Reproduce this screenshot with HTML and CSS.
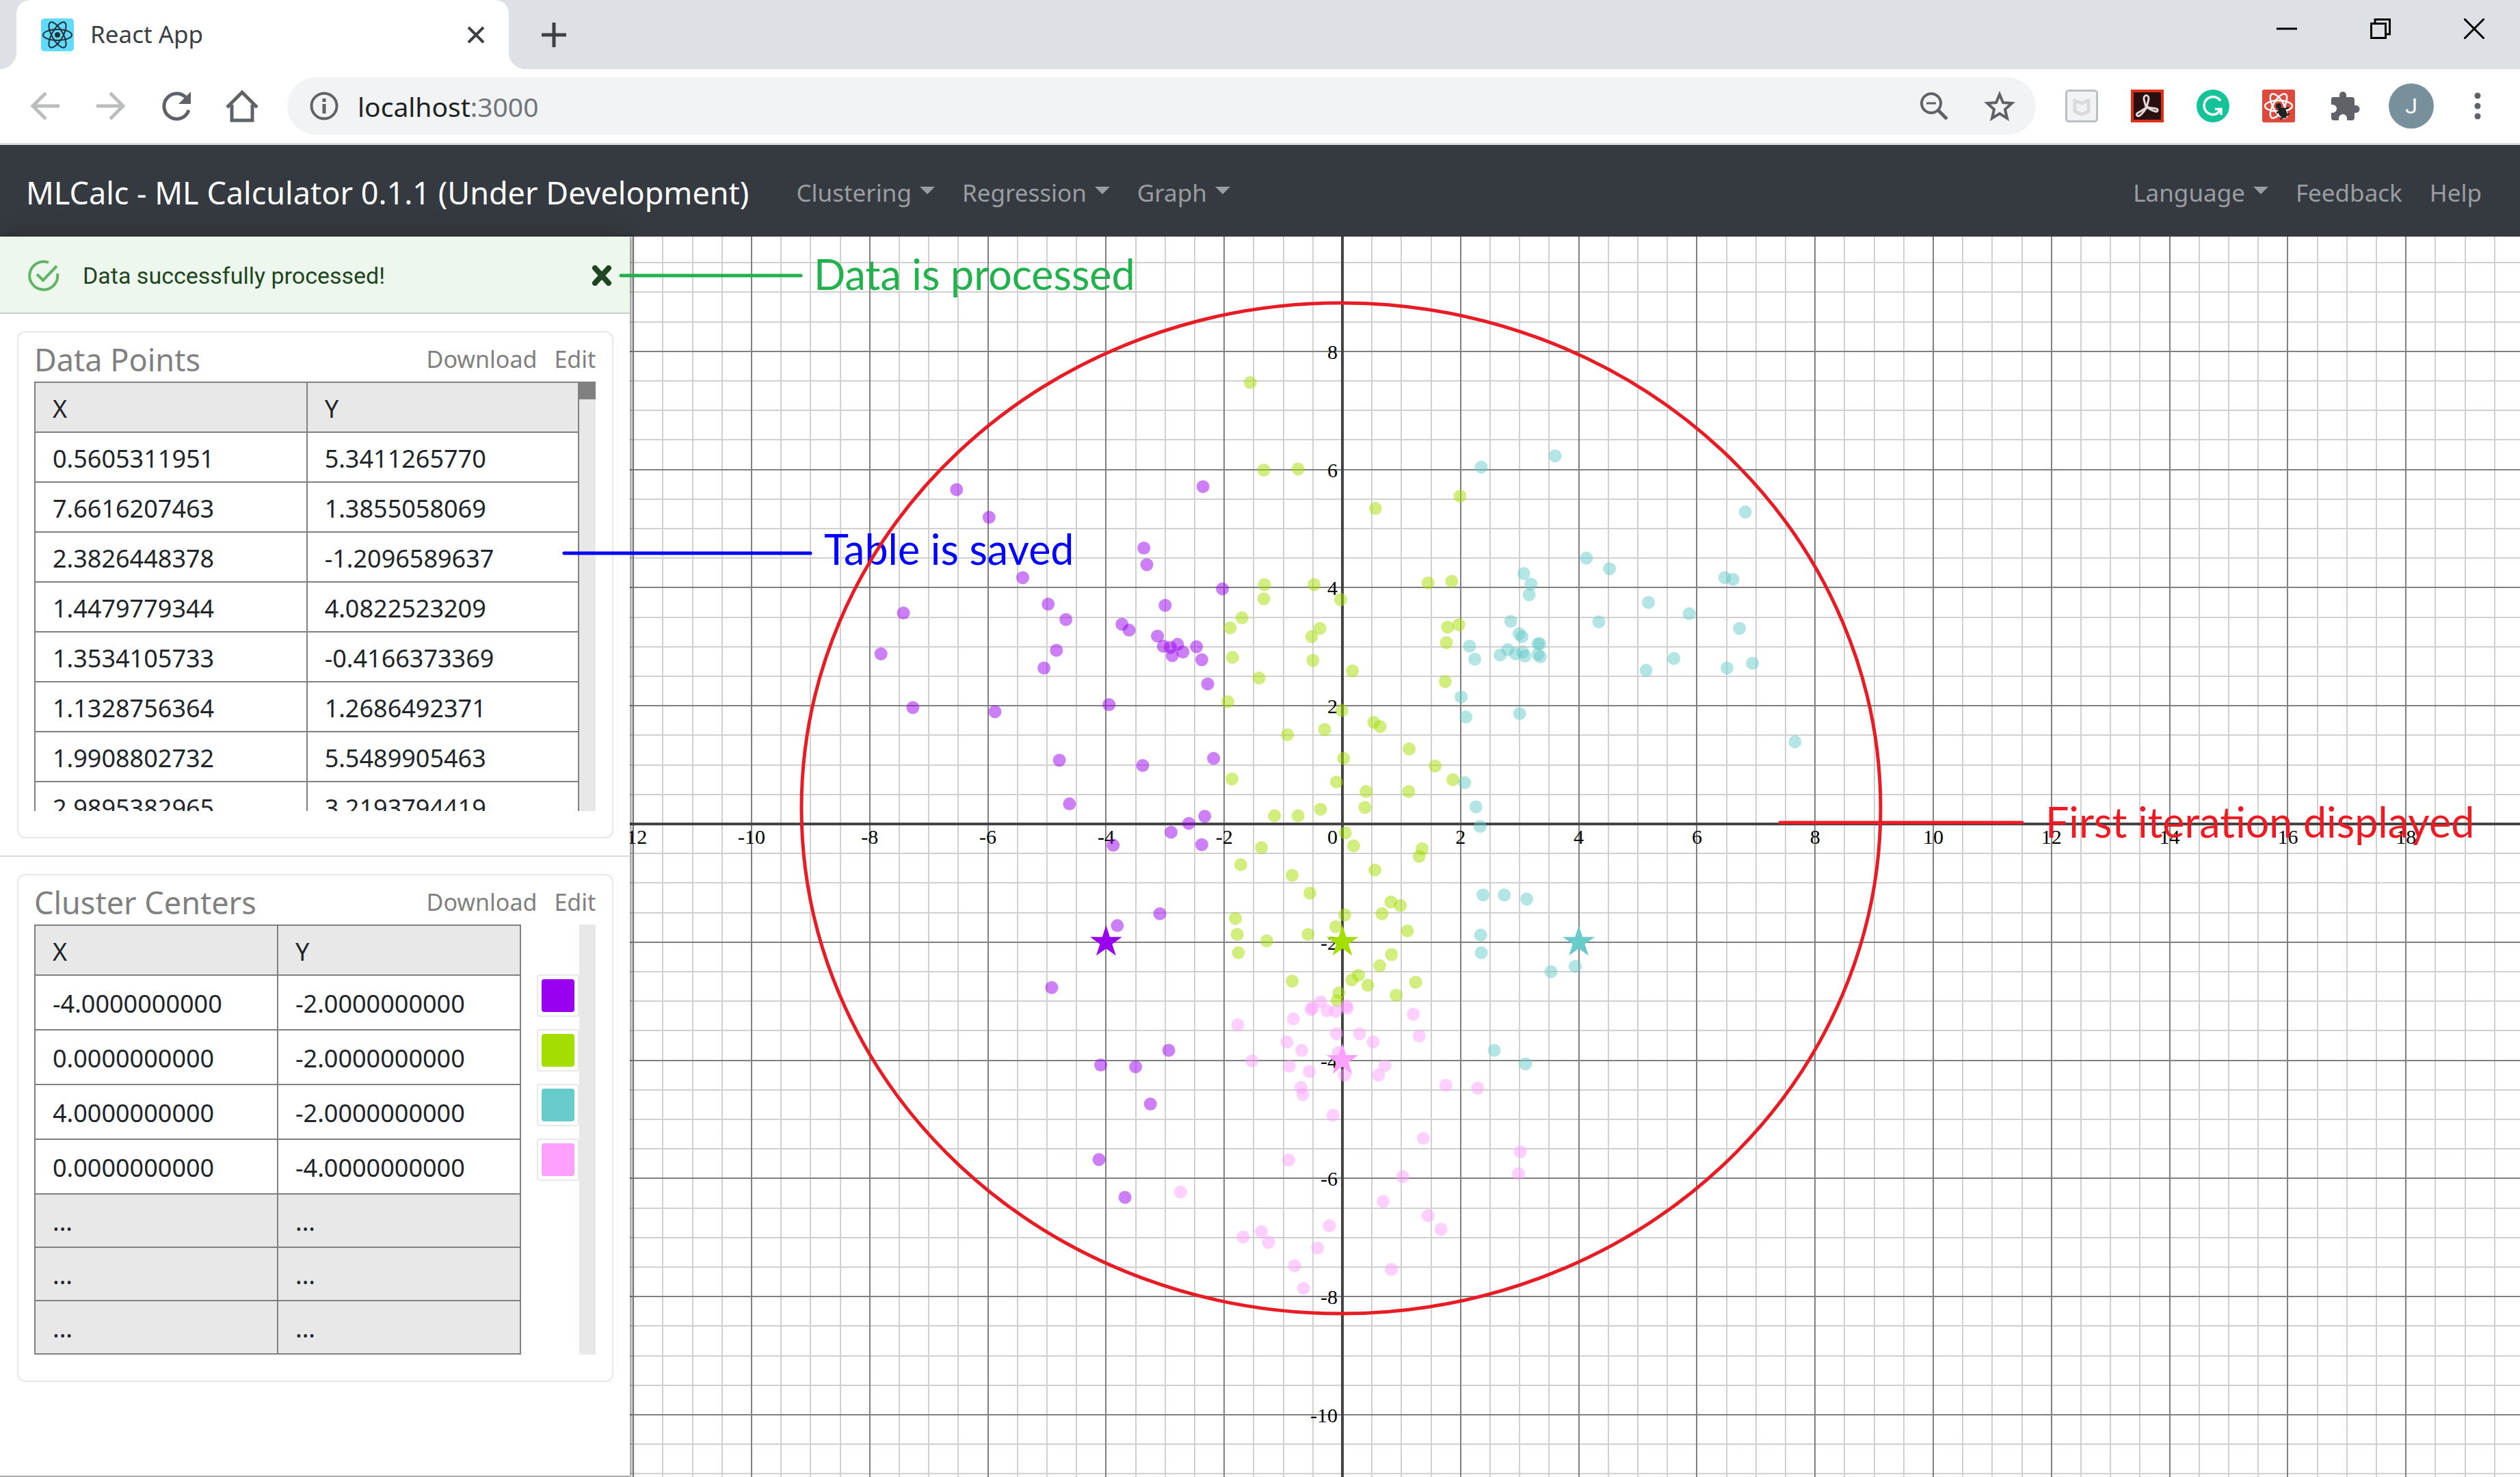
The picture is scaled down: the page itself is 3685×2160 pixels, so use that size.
FILE: index.html
```html
<!DOCTYPE html>
<html lang="en">
<head>
<meta charset="utf-8">
<title>React App</title>
<link rel="stylesheet" href="styles.css">
</head>
<body>
<header class="browser">
  <div class="tabstrip">
    <div class="tab">
      <svg class="icon-48" viewBox="0 0 48 48" aria-hidden="true"><rect width="48" height="48" rx="5" fill="#61dafb"/><g fill="none" stroke="#20303a" stroke-width="2"><ellipse cx="24" cy="24" rx="21" ry="8"/><ellipse cx="24" cy="24" rx="21" ry="8" transform="rotate(60 24 24)"/><ellipse cx="24" cy="24" rx="21" ry="8" transform="rotate(120 24 24)"/></g><circle cx="24" cy="24" r="4" fill="#20303a"/></svg>
      <span class="tab-title">React App</span>
      <button class="plain tab-close" aria-label="Close tab"><svg width="28" height="28" viewBox="0 0 28 28"><path d="M3 3l22 22M25 3L3 25" stroke="#3c4043" stroke-width="4"/></svg></button>
    </div>
    <button class="plain new-tab" aria-label="New tab"><svg width="38" height="38" viewBox="0 0 38 38"><path d="M19 1v36M1 19h36" stroke="#3c4043" stroke-width="5"/></svg></button>
    <div class="window-controls">
      <button class="plain" aria-label="Minimize"><svg width="30" height="30" viewBox="0 0 30 30"><path d="M0 15h30" stroke="#000" stroke-width="3"/></svg></button>
      <button class="plain" aria-label="Restore"><svg width="30" height="30" viewBox="0 0 30 30" fill="none" stroke="#000" stroke-width="3"><path d="M1.500 7.500h21v21h-21zM7 7V1.500h21.500v21.500H23"/></svg></button>
      <button class="plain" aria-label="Close window"><svg width="30" height="30" viewBox="0 0 30 30"><path d="M0 0l30 30M30 0L0 30" stroke="#000" stroke-width="3"/></svg></button>
    </div>
  </div>
  <div class="toolbar">
    <div class="nav-buttons">
      <button class="plain" aria-label="Back"><svg width="48" height="48" viewBox="0 0 48 48" fill="none" stroke="#babcbe" stroke-width="5"><path d="M45 24H7M25 5L6 24l19 19"/></svg></button>
      <button class="plain" aria-label="Forward"><svg width="48" height="48" viewBox="0 0 48 48" fill="none" stroke="#babcbe" stroke-width="5"><path d="M3 24h38M23 5l19 19-19 19"/></svg></button>
      <button class="plain" aria-label="Reload"><svg width="48" height="48" viewBox="0 0 48 48"><path d="M39 13A18.500 18.500 0 1 0 42 30" fill="none" stroke="#5f6368" stroke-width="5"/><path d="M45 3v18H27z" fill="#5f6368"/></svg></button>
      <button class="plain" aria-label="Home"><svg width="48" height="48" viewBox="0 0 48 48" fill="none" stroke="#5f6368" stroke-width="5"><path d="M2 26L24 4l22 22M9 22v23h30V22"/></svg></button>
    </div>
    <div class="omnibox">
      <svg width="42" height="42" viewBox="0 0 42 42" aria-hidden="true"><circle cx="21" cy="21" r="18.500" fill="none" stroke="#5f6368" stroke-width="4"/><path d="M21 18v14M21 10v5" stroke="#5f6368" stroke-width="5"/></svg>
      <span class="url">localhost<span class="port">:3000</span></span>
      <button class="plain zoom-button" aria-label="Zoom"><svg width="42" height="42" viewBox="0 0 42 42" fill="none" stroke="#5f6368"><circle cx="17" cy="17" r="14" stroke-width="4"/><path d="M10 17h14" stroke-width="3"/><path d="M27 27l13 13" stroke-width="5"/></svg></button>
      <button class="plain" aria-label="Bookmark"><svg width="46" height="46" viewBox="0 0 46 46"><path d="M23 6l5 12 13 1-10 9 3 13-11-7-11 7 3-13-10-9 13-1z" fill="none" stroke="#5f6368" stroke-width="4"/></svg></button>
    </div>
    <div class="extensions">
      <button class="plain" aria-label="McAfee"><svg class="icon-48" viewBox="0 0 48 48"><rect x="1.500" y="1.500" width="45" height="45" rx="4" fill="#f1f3f4" stroke="#b9c0c4" stroke-width="3"/><path d="M14 16l10 4 10-4v16l-10 4-10-4z" fill="none" stroke="#d7dbdd" stroke-width="5"/></svg></button>
      <button class="plain" aria-label="Adobe Acrobat"><svg class="icon-48" viewBox="0 0 48 48"><rect x="2" y="2" width="44" height="44" fill="#2a0f10" stroke="#dc3018" stroke-width="4"/><g fill="none" stroke="#e0d8d7" stroke-width="3"><path d="M23 28c-1-5-4-11-4-15 0-6 7-6 7 0 0 4-3 10-3 15z"/><path d="M23 26c-3 5-6 9-10 12-3 2-6-1-4-3 4-3 9-5 14-9z"/><path d="M22 25c5 2 9 2 15 3 4 1 2 5-1 4-5-1-9-4-14-7z"/></g></svg></button>
      <button class="plain" aria-label="Grammarly"><svg class="icon-48" viewBox="0 0 48 48"><circle cx="24" cy="24" r="24" fill="#15c39a"/><path d="M35 16.500A13 13 0 1 0 31 34.500L34 30M27 28.500h9V37" fill="none" stroke="#fff" stroke-width="3.500"/></svg></button>
      <button class="plain" aria-label="React Developer Tools"><svg class="icon-48" viewBox="0 0 48 48"><rect width="48" height="48" rx="3" fill="#dd4a3c"/><g fill="none" stroke="#fff" stroke-width="2.500"><ellipse cx="24" cy="24" rx="20" ry="8"/><ellipse cx="24" cy="24" rx="20" ry="8" transform="rotate(60 24 24)"/><ellipse cx="24" cy="24" rx="20" ry="8" transform="rotate(120 24 24)"/></g><circle cx="24" cy="24" r="4" fill="#222"/><ellipse cx="30" cy="34" rx="6" ry="8" transform="rotate(-30 30 34)" fill="#222"/><path d="M21 34l18-8M26 43l14-8M23 28l4 4M31 26l3 16" stroke="#222" stroke-width="2.500"/></svg></button>
      <button class="plain" aria-label="Extensions"><svg class="icon-48" viewBox="0 0 48 48"><path d="M8 11h9V8a5 5 0 0 1 10 0v3h8a4 4 0 0 1 4 4v8h2a5.500 5.500 0 0 1 0 11h-2v7a4 4 0 0 1-4 4H28v-3a6 6 0 0 0-12 0v3H9a4 4 0 0 1-4-4v-7h2a6 6 0 0 0 0-12H5v-8a3 3 0 0 1 3-3z" fill="#5f6368"/></svg></button>
      <button class="plain avatar" aria-label="Profile">J</button>
      <button class="plain" aria-label="Menu"><svg width="16" height="40" viewBox="0 0 16 40" fill="#5f6368"><circle cx="8" cy="5" r="4.500"/><circle cx="8" cy="20" r="4.500"/><circle cx="8" cy="35" r="4.500"/></svg></button>
    </div>
  </div>
</header>

<nav class="navbar">
  <a class="brand" href="#">MLCalc - ML Calculator 0.1.1 (Under Development)</a>
  <button class="plain nav-item caret">Clustering</button>
  <button class="plain nav-item caret">Regression</button>
  <button class="plain nav-item caret">Graph</button>
  <span class="spacer"></span>
  <button class="plain nav-item caret">Language</button>
  <a class="nav-item" href="#">Feedback</a>
  <a class="nav-item" href="#">Help</a>
</nav>

<main class="workspace">
  <svg class="plot" viewBox="0 0 3685 1814" preserveAspectRatio="xMinYMin slice" role="img" aria-label="Cluster plot">
    <g id="grid"></g>
    <g id="points"></g>
  </svg>

  <aside class="sidebar">
    <div class="alert" role="status">
      <svg width="46" height="46" viewBox="0 0 46 46" fill="none" stroke="#5fb563" stroke-width="4" aria-hidden="true"><path d="M43 20A20.500 20.500 0 1 1 30 4"/><path d="M13 21l9 9L42 9"/></svg>
      <span class="alert-text">Data successfully processed!</span>
      <button class="plain" aria-label="Dismiss"><svg width="30" height="30" viewBox="0 0 30 30"><path d="M5 4l20 22M25 4L5 26" stroke="#1e4620" stroke-width="8" stroke-linecap="round"/></svg></button>
    </div>

    <section class="pane">
      <div class="card">
        <div class="card-head"><h2>Data Points</h2><a href="#">Download</a><a href="#">Edit</a></div>
        <div class="scroll points-scroll">
          <table>
            <thead><tr><th>X</th><th>Y</th></tr></thead>
            <tbody>
              <tr><td>0.5605311951</td><td>5.3411265770</td></tr>
              <tr><td>7.6616207463</td><td>1.3855058069</td></tr>
              <tr><td>2.3826448378</td><td>-1.2096589637</td></tr>
              <tr><td>1.4479779344</td><td>4.0822523209</td></tr>
              <tr><td>1.3534105733</td><td>-0.4166373369</td></tr>
              <tr><td>1.1328756364</td><td>1.2686492371</td></tr>
              <tr><td>1.9908802732</td><td>5.5489905463</td></tr>
              <tr><td>2.9895382965</td><td>3.2193794419</td></tr>
            </tbody>
          </table>
          <div class="track"><div class="thumb"></div></div>
        </div>
      </div>
    </section>

    <section class="pane">
      <div class="card">
        <div class="card-head"><h2>Cluster Centers</h2><a href="#">Download</a><a href="#">Edit</a></div>
        <div class="scroll">
          <table class="centers">
            <thead><tr><th>X</th><th>Y</th></tr></thead>
            <tbody>
              <tr><td>-4.0000000000</td><td>-2.0000000000</td></tr>
              <tr><td>0.0000000000</td><td>-2.0000000000</td></tr>
              <tr><td>4.0000000000</td><td>-2.0000000000</td></tr>
              <tr><td>0.0000000000</td><td>-4.0000000000</td></tr>
              <tr class="empty"><td>...</td><td>...</td></tr>
              <tr class="empty"><td>...</td><td>...</td></tr>
              <tr class="empty"><td>...</td><td>...</td></tr>
            </tbody>
          </table>
          <div class="swatches">
            <button class="swatch purple" aria-label="Colour of cluster 1"></button>
            <button class="swatch green" aria-label="Colour of cluster 2"></button>
            <button class="swatch teal" aria-label="Colour of cluster 3"></button>
            <button class="swatch pink" aria-label="Colour of cluster 4"></button>
          </div>
          <div class="track"></div>
        </div>
      </div>
    </section>
  </aside>

  <svg class="notes" viewBox="0 0 3685 1814" preserveAspectRatio="xMinYMin slice">
    <g stroke-width="5" stroke-linecap="round" fill="none">
      <path d="M908 57H1171" stroke="#22b14c"/>
      <path d="M825 463H1185" stroke="#0000ff"/>
      <path d="M2603 857H2957" stroke="#ed1c24"/>
    </g>
    <text class="note" x="1190" y="78" fill="#22b14c">Data is processed</text>
    <text class="note" x="1205" y="480" fill="#0000ff">Table is saved</text>
    <text class="note" x="2991" y="879" fill="#ed1c24">First iteration displayed</text>
    <ellipse cx="1961" cy="836" rx="789" ry="739" fill="none" stroke="#e81c24" stroke-width="5"/>
  </svg>
</main>
<script src="plot.js"></script>
</body>
</html>
```
FILE: styles.css
```css
* { box-sizing: border-box; }

body {
  margin: 0;
  min-height: 100vh;
  display: flex;
  flex-direction: column;
  font-family: "Noto Sans", "Open Sans", sans-serif;
  font-size: 36px;
  color: #212529;
  background: #fff;
}

svg { display: block; }
a { color: inherit; text-decoration: none; }

.plain {
  padding: 0;
  border: 0;
  background: none;
  font: inherit;
  color: inherit;
}

.icon-48 { width: 48px; height: 48px; }

/* Browser window */
.tabstrip {
  display: flex;
  align-items: center;
  height: 101px;
  padding: 0 52px 0 24px;
  background: #dde1e6;
}
.tab {
  position: relative;
  display: flex;
  align-items: center;
  width: 720px;
  height: 101px;
  padding: 0 34px 0 36px;
  border-radius: 20px 20px 0 0;
  background: #fff;
}
.tab::before,
.tab::after {
  content: "";
  position: absolute;
  bottom: 0;
  width: 24px;
  height: 24px;
}
.tab::before { left: -24px; background: radial-gradient(circle at 0 0, transparent 24px, #fff 24px); }
.tab::after { right: -24px; background: radial-gradient(circle at 100% 0, transparent 24px, #fff 24px); }
.tab-title {
  flex: 1;
  padding: 0 0 3px 24px;
  font-size: 35px;
  color: #3c4043;
}
.new-tab { margin-left: 47px; }
.window-controls {
  display: flex;
  gap: 107px;
  margin-left: auto;
  padding-bottom: 17px;
}

.toolbar {
  display: flex;
  align-items: center;
  height: 111px;
  padding: 0 54px 0 42px;
  border-bottom: 3px solid #dadce0;
}
.nav-buttons { display: flex; gap: 48px; }
.omnibox {
  flex: 1;
  display: flex;
  align-items: center;
  height: 84px;
  margin: 0 43px 0 42px;
  padding: 0 30px 0 33px;
  border-radius: 42px;
  background: #f1f3f4;
}
.url { flex: 1; padding-left: 28px; font-size: 39px; color: #202124; }
.port { color: #72767a; }
.zoom-button { margin-right: 52px; }
.extensions { display: flex; align-items: center; gap: 48px; }
.avatar {
  width: 66px;
  height: 66px;
  margin: 0 8px 0 -7px;
  border-radius: 50%;
  background: #78909c;
  color: #fff;
  font-family: Roboto, sans-serif;
  font-size: 32px;
}

/* Application bar */
.navbar {
  display: flex;
  align-items: center;
  gap: 40px;
  height: 134px;
  padding: 4px 56px 0 38px;
  background: #343a40;
  color: #9a9da0;
}
.brand { margin-right: 29px; font-size: 45px; color: #fff; }
.spacer { flex: 1; }
.nav-item { display: flex; align-items: center; font-size: 35px; }
.caret::after {
  content: "";
  margin: 0 0 6px 12px;
  border: 11px solid transparent;
  border-top-color: #9a9da0;
  border-bottom: 0;
}

/* Workspace: the plot runs below the sidebar, the notes above both */
.workspace {
  flex: 1;
  display: grid;
  grid-template-columns: 25% 1fr;
}
.plot, .notes {
  grid-area: 1 / 1 / 2 / 3;
  width: 100%;
  height: 100%;
}
.notes { z-index: 2; pointer-events: none; }
.note { font-family: Lato, sans-serif; font-size: 61px; }
.axis-label { font-family: "Liberation Serif", serif; font-size: 30px; fill: #000; }

.sidebar {
  grid-area: 1 / 1 / 2 / 2;
  z-index: 1;
  background: #fff;
  border-bottom: 2px solid #aaa;
  box-shadow: 2px 0 6px rgba(0, 0, 0, 0.5);
}

.alert {
  display: flex;
  align-items: center;
  height: 113px;
  padding: 3px 26px 0 41px;
  border-bottom: 2px solid #ccc;
  background: #edf7ed;
  color: #1e4620;
  box-shadow: 0 -24px 20px -14px #333;
}
.alert-text {
  flex: 1;
  padding-left: 34px;
  font-family: Roboto, sans-serif;
  font-size: 34px;
}

.pane { padding: 25px 24px 25px 25px; }
.pane + .pane { border-top: 2px solid #ddd; }
.card {
  padding: 20px 24px 38px 23px;
  border: 2px solid #e8e8e8;
  border-radius: 12px;
}
.card-head {
  display: flex;
  align-items: center;
  height: 52px;
  padding-bottom: 14px;
  color: #808080;
}
.card-head h2 { flex: 1; margin: 0; font-size: 45px; font-weight: 400; }
.card-head a { margin-left: 25px; font-size: 34px; }

.scroll { display: flex; justify-content: space-between; }
.points-scroll { height: 628px; overflow: hidden; }
.track { flex: none; width: 24px; background: #e8e8e8; }
.thumb { height: 26px; background: #808080; }

table {
  flex: 1;
  align-self: flex-start;
  table-layout: fixed;
  border-collapse: collapse;
}
th, td {
  width: 50%;
  height: 73px;
  padding: 4px 25px 0;
  border: 2px solid #808080;
  line-height: 48px;
  font-weight: 400;
  text-align: left;
}
td { background: #fff; }
th, .empty td { background: #e8e8e8; }
.centers { flex: none; width: 712px; }
.centers td { height: 80px; }
.centers .empty td { height: 78px; }

.swatches {
  display: flex;
  flex-direction: column;
  gap: 18px;
  margin-left: auto;
  padding-top: 73px;
}
.swatch {
  width: 62px;
  height: 62px;
  padding: 5px;
  border: 2px solid #e8e8e8;
  border-radius: 4px;
  background-color: #fff;
  background-clip: content-box;
}
.swatch::before {
  content: "";
  display: block;
  height: 48px;
  border-radius: 4px;
  background: currentColor;
}
.purple { color: #9900ef; }
.green { color: #a4dd00; }
.teal { color: #68ccca; }
.pink { color: #fda1ff; }
```
FILE: plot.js
```js
const ORIGIN = { x: 1963, y: 859 };
const UNIT = 86.4;

const clusters = [
  { color: "#9900ef", center: [-4, -2], points: [
    [-6.53,5.66],[-5.98,5.19],[-5.41,4.17],[-4.98,3.72],[-4.68,3.46],[-4.84,2.94],[-5.05,2.64],[-7.43,3.57],[-7.81,2.88],[-7.27,1.97],
    [-5.88,1.9],[-3.95,2.02],[-2.36,5.71],[-3.36,4.67],[-3.31,4.39],[-2.03,3.98],[-3,3.7],[-3.73,3.38],[-3.61,3.28],[-3.13,3.18],
    [-3.03,3.01],[-2.91,2.99],[-2.79,3.04],[-2.7,2.91],[-2.88,2.85],[-2.47,3],[-2.38,2.78],[-2.28,2.37],[-2.18,1.11],[-4.79,1.08],
    [-3.38,0.99],[-4.62,0.34],[-2.33,0.13],[-2.6,0.01],[-2.9,-0.14],[-2.38,-0.35],[-3.88,-0.36],[-3.09,-1.52],[-3.81,-1.72],[-4.92,-2.77],
    [-2.94,-3.83],[-4.09,-4.08],[-3.5,-4.11],[-3.25,-4.74],[-4.12,-5.68],[-3.68,-6.32]
  ] },
  { color: "#a4dd00", center: [0, -2], points: [
    [-1.56,7.47],[-1.33,5.99],[-0.75,6.01],[0.56,5.34],[1.99,5.55],[1.45,4.08],[1.85,4.11],[-1.32,4.05],[-0.48,4.05],[-1.33,3.81],
    [-0.03,3.8],[-1.7,3.49],[-1.9,3.32],[-0.38,3.31],[-0.52,3.17],[-1.86,2.82],[-0.5,2.77],[0.17,2.59],[-1.41,2.47],[-1.94,2.07],
    [-0.01,1.92],[-0.3,1.6],[-0.93,1.51],[0.53,1.72],[0.64,1.65],[1.13,1.27],[1.57,0.98],[0.02,1.11],[1.87,0.75],[-1.87,0.76],
    [-0.1,0.71],[0.4,0.55],[1.12,0.55],[0.38,0.28],[-0.37,0.25],[-1.15,0.14],[-0.75,0.14],[1.78,3.33],[1.97,3.37],[1.76,3.07],
    [1.74,2.41],[0.05,-0.15],[0.19,-0.37],[-1.37,-0.4],[1.35,-0.42],[1.3,-0.55],[-1.72,-0.69],[-0.85,-0.87],[0.55,-0.78],[-0.55,-1.17],
    [0.82,-1.32],[0.98,-1.38],[0.67,-1.52],[0.04,-1.54],[-0.11,-1.74],[1.1,-1.81],[-1.81,-1.6],[-1.78,-1.87],[-1.28,-1.98],[-0.58,-1.87],
    [-1.76,-2.18],[0.83,-2.21],[0.63,-2.4],[0.27,-2.56],[0.16,-2.64],[0.43,-2.73],[-0.85,-2.66],[1.24,-2.68],[0.91,-2.9],[-0.06,-2.86],
    [-0.09,-2.99]
  ] },
  { color: "#68ccca", center: [4, -2], points: [
    [2.35,6.04],[3.6,6.23],[4.13,4.5],[4.52,4.32],[3.07,4.24],[3.19,4.06],[3.16,3.88],[2.85,3.43],[4.34,3.42],[2.99,3.22],
    [3.04,3.17],[3.31,3.05],[3.34,3.05],[2.15,3.01],[2.24,2.79],[2.67,2.86],[2.8,2.95],[2.93,2.88],[3.05,2.91],[3.09,2.84],
    [3.31,2.87],[3.35,2.83],[2.01,2.15],[2.09,1.81],[3,1.87],[2.07,0.7],[2.26,0.29],[2.33,-0.04],[6.82,5.28],[6.47,4.17],
    [6.61,4.14],[5.18,3.75],[5.87,3.56],[6.72,3.31],[5.14,2.6],[5.61,2.8],[6.51,2.64],[6.94,2.72],[7.66,1.39],[2.38,-1.2],
    [2.74,-1.2],[3.12,-1.27],[2.34,-1.88],[2.35,-2.18],[3.53,-2.5],[3.94,-2.41],[2.57,-3.83],[3.1,-4.06]
  ] },
  { color: "#fda1ff", center: [0, -4], points: [
    [-2.74,-6.23],[-0.37,-3.01],[-0.51,-3.11],[-0.53,-3.14],[-0.26,-3.16],[-0.11,-3.17],[0.07,-3.08],[0.08,-3.12],[-0.83,-3.3],[1.2,-3.22],
    [-1.77,-3.4],[-0.1,-3.55],[0.29,-3.55],[1.3,-3.59],[-0.94,-3.69],[0.52,-3.69],[-0.69,-3.83],[-0.07,-3.87],[-1.53,-4.01],[-0.9,-4.1],
    [0.72,-4.09],[-0.56,-4.19],[0.04,-4.25],[0.61,-4.25],[1.75,-4.42],[2.29,-4.47],[-0.7,-4.46],[-0.67,-4.58],[-0.16,-4.93],[1.37,-5.32],
    [-0.91,-5.69],[3.01,-5.55],[2.98,-5.92],[1.02,-5.97],[0.69,-6.39],[1.45,-6.63],[1.67,-6.86],[-0.22,-6.8],[-1.37,-6.9],[-1.68,-6.99],
    [-1.25,-7.08],[-0.42,-7.18],[-0.81,-7.48],[-0.66,-7.86],[0.83,-7.54]
  ] }
];

const px = x => ORIGIN.x + x * UNIT;
const py = y => ORIGIN.y - y * UNIT;

function add(parent, name, attributes, text) {
  const node = document.createElementNS("http://www.w3.org/2000/svg", name);
  for (const key in attributes) node.setAttribute(key, attributes[key]);
  if (text !== undefined) node.textContent = text;
  parent.appendChild(node);
}

function line(parent, vertical, at, stroke, width) {
  const d = vertical ? `M${at} 0V1814` : `M0 ${at}H3685`;
  add(parent, "path", { d, stroke, "stroke-width": width });
}

const grid = document.getElementById("grid");
const each = (step, draw) => {
  for (let v = -24; v <= 24; v += step) draw(v);
};
each(0.5, v => {
  line(grid, true, Math.round(px(v)), "#d0d0d0", 2);
  line(grid, false, Math.round(py(v)), "#d0d0d0", 2);
});
each(2, v => {
  line(grid, true, Math.round(px(v)), "#808080", 2);
  line(grid, false, Math.round(py(v)), "#808080", 2);
});
line(grid, true, ORIGIN.x, "#444", 4);
line(grid, false, ORIGIN.y, "#444", 4);
for (let v = -12; v <= 18; v += 2) {
  if (v) add(grid, "text", { x: px(v), y: ORIGIN.y + 29, class: "axis-label", "text-anchor": "middle" }, v);
}
add(grid, "text", { x: ORIGIN.x - 7, y: ORIGIN.y + 29, class: "axis-label", "text-anchor": "end" }, 0);
for (let v = -10; v <= 8; v += 2) {
  if (v) add(grid, "text", { x: ORIGIN.x - 7, y: py(v) + 11, class: "axis-label", "text-anchor": "end" }, v);
}

const layer = document.getElementById("points");
for (const c of clusters) {
  for (const [x, y] of c.points) {
    add(layer, "circle", { cx: px(x), cy: py(y), r: 9.5, fill: c.color, "fill-opacity": 0.5 });
  }
}
for (const c of clusters) {
  const corners = [];
  for (let i = 0; i < 10; i++) {
    const r = i % 2 ? 9.4 : 24.5;
    const a = i * Math.PI / 5;
    corners.push(`${px(c.center[0]) + r * Math.sin(a)},${py(c.center[1]) - r * Math.cos(a)}`);
  }
  add(layer, "polygon", { points: corners.join(" "), fill: c.color });
}
```
